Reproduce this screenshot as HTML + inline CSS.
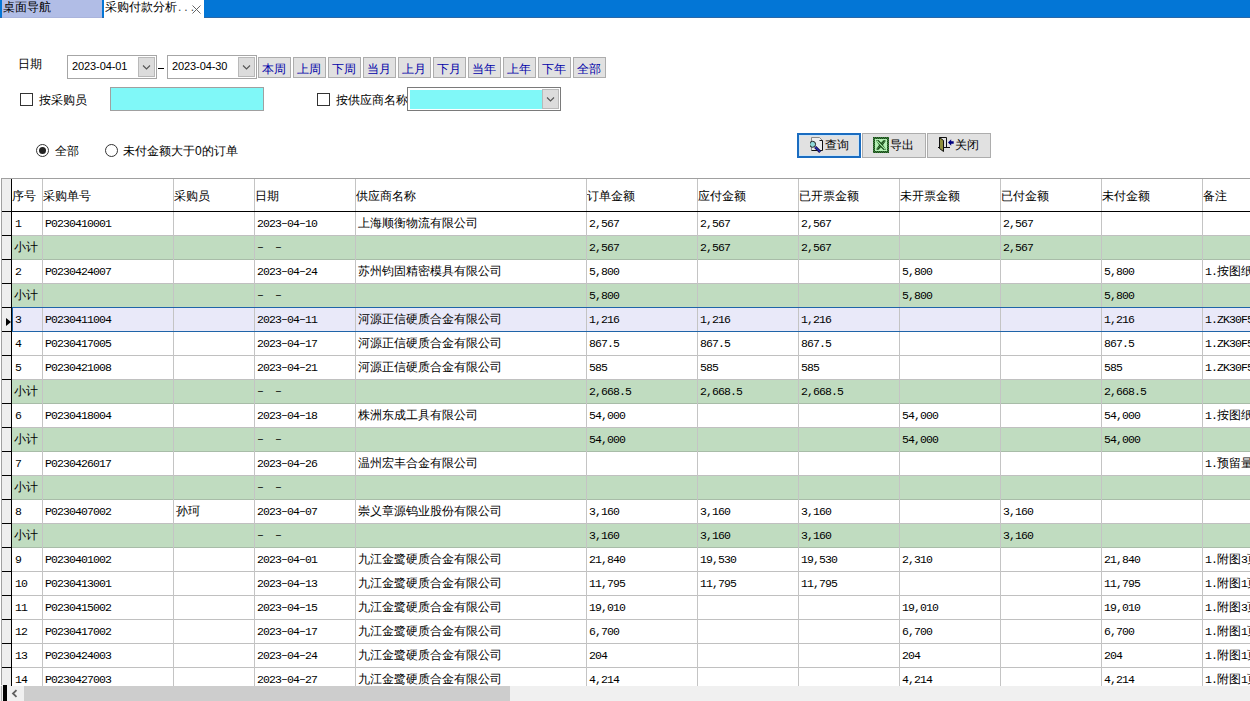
<!DOCTYPE html>
<html><head><meta charset="utf-8">
<style>
*{margin:0;padding:0;box-sizing:border-box}
html,body{width:1250px;height:701px;overflow:hidden;background:#fff;font-family:"Liberation Sans",sans-serif;font-size:12px;color:#000;position:relative}
.abs{position:absolute}
.tabbar{position:absolute;left:0;top:0;width:1250px;height:18px;background:#0376d6;border-bottom:1px solid #2a68a8}
.tab1{position:absolute;left:2px;top:0;width:100px;height:18px;background:#b1bde6;border-bottom:1px solid #aab4dc}
.tab2{position:absolute;left:104px;top:0;width:100px;height:18px;background:#fff}
.tabtxt{position:absolute;top:0px;font-size:12px;line-height:14px;white-space:nowrap;font-weight:500}
.lbl{position:absolute;font-size:12px;line-height:14px;white-space:nowrap;font-weight:500}
.combo{position:absolute;border:1px solid #a6a6a6;background:#fff}
.ddb{position:absolute;background:#dcdcdc;border:1px solid #b9b9b9}
.ddb svg{position:absolute;left:0;top:0}
.qb{position:absolute;top:57px;width:33px;height:21px;background:#e1e1e1;border:1px solid #adadad;color:#0000a8;font-size:12px;line-height:22px;text-align:center;white-space:nowrap;text-indent:-1px;font-weight:500}
.chk{position:absolute;width:13px;height:13px;border:1px solid #333;background:#fff}
.cyan{position:absolute;background:#80f8f8}
.radio{position:absolute;width:13px;height:13px;border:1px solid #555;border-radius:50%;background:#fff}
.btn{position:absolute;top:133px;height:25px;background:#e1e1e1;border:1px solid #adadad;font-size:12px;white-space:nowrap}
.grid{position:absolute;left:0;top:178px;width:1250px;height:508px;overflow:hidden}
.gi{position:absolute;left:0;top:-178px;width:1250px;height:685px}
.gi > *{position:absolute}
.hdr{left:1px;top:178px;width:1250px;height:34px;border-top:1px solid #a0a0a0;border-bottom:1px solid #000;background:#fff}
.hc{top:189px;font-size:12px;line-height:14px;white-space:nowrap;font-weight:500}
.row{left:1px;width:1250px;height:24px;background:#fff;border-bottom:1px solid #c0c0c0}
.row.green{background:#c0dcc0;border-bottom-color:#a8bca8}
.row.sel{background:#e9e9f9}
.dc{line-height:14px;white-space:nowrap;font-size:12px}
.m{font-family:"Liberation Mono",monospace;font-size:11.5px;letter-spacing:-0.9px}
.d{position:relative;top:-1px}
.c{font-size:12px;font-weight:500}
.vl{top:179px;width:1px;height:507px;background:#c4c4c4}
.hline{left:2px;top:211px;width:1250px;height:1px;background:#000}
.ind{left:1px;top:179px;width:10px;height:507px;background:#eeeeee}
.outl{left:1px;top:178px;width:1px;height:507px;background:#a0a0a0}
.indline{left:11px;top:179px;width:1px;height:507px;background:#000}
.indtick{left:2px;width:9px;height:1px;background:#000}
.arrow{left:6px;top:318px;width:0;height:0;border-top:4px solid transparent;border-bottom:4px solid transparent;border-left:5px solid #000}
.selbox{left:12px;top:307px;width:1250px;height:25px;border:1px solid #1f64a8;border-right:none}
.scroll{position:absolute;left:0;top:686px;width:1250px;height:15px;background:#f0f0f0}
</style></head><body>
<div class="tabbar"></div>
<div class="tab1"><div class="tabtxt" style="left:1px">桌面导航</div></div>
<div class="tab2"><div class="tabtxt" style="left:1px">采购付款分析<span style="letter-spacing:3px;margin-left:1px;color:#444">...</span></div>
<svg class="abs" style="left:87px;top:4px" width="11" height="11" viewBox="0 0 11 11"><path d="M1.5 1.5L9.5 9.5M9.5 1.5L1.5 9.5" stroke="#555" stroke-width="0.9"/></svg></div>

<div class="lbl" style="left:18px;top:57px">日期</div>
<div class="combo" style="left:67px;top:55px;width:90px;height:24px">
 <div class="lbl" style="left:4px;top:3px;font-size:11px;font-weight:400;letter-spacing:-0.1px">2023-04-01</div>
 <div class="ddb" style="left:70px;top:1px;width:17px;height:20px"><svg width="15" height="18"><path d="M4 7.5l3.5 3.5 3.5-3.5" fill="none" stroke="#555" stroke-width="1.1"/></svg></div>
</div>
<div class="abs" style="left:158px;top:68px;width:6px;height:1px;background:#000"></div>
<div class="combo" style="left:167px;top:55px;width:90px;height:24px">
 <div class="lbl" style="left:4px;top:3px;font-size:11px;font-weight:400;letter-spacing:-0.1px">2023-04-30</div>
 <div class="ddb" style="left:70px;top:1px;width:17px;height:20px"><svg width="15" height="18"><path d="M4 7.5l3.5 3.5 3.5-3.5" fill="none" stroke="#555" stroke-width="1.1"/></svg></div>
</div>
<div class="qb" style="left:258px">本周</div><div class="qb" style="left:293px">上周</div><div class="qb" style="left:328px">下周</div><div class="qb" style="left:363px">当月</div><div class="qb" style="left:398px">上月</div><div class="qb" style="left:433px">下月</div><div class="qb" style="left:468px">当年</div><div class="qb" style="left:503px">上年</div><div class="qb" style="left:538px">下年</div><div class="qb" style="left:573px">全部</div>

<div class="chk" style="left:20px;top:93px"></div>
<div class="lbl" style="left:39px;top:93px">按采购员</div>
<div class="combo" style="left:110px;top:87px;width:154px;height:24px;border-color:#a0a0a0"><div class="cyan" style="left:0;top:0;right:0;bottom:0"></div></div>
<div class="chk" style="left:317px;top:93px"></div>
<div class="lbl" style="left:336px;top:93px">按供应商名称</div>
<div class="combo" style="left:407px;top:87px;width:154px;height:24px;border-color:#7a7a7a">
 <div class="cyan" style="left:2px;top:2px;width:132px;height:19px"></div>
 <div class="ddb" style="left:134px;top:1px;width:17px;height:20px"><svg width="15" height="18"><path d="M4 7.5l3.5 3.5 3.5-3.5" fill="none" stroke="#555" stroke-width="1.1"/></svg></div>
</div>

<svg class="abs" style="left:36px;top:144px" width="13" height="13"><circle cx="6.5" cy="6.5" r="6" fill="#fff" stroke="#333" stroke-width="1"/><circle cx="6.5" cy="6.5" r="3.5" fill="#222"/></svg>
<div class="lbl" style="left:55px;top:144px">全部</div>
<svg class="abs" style="left:105px;top:144px" width="13" height="13"><circle cx="6.5" cy="6.5" r="6" fill="#fff" stroke="#333" stroke-width="1"/></svg>
<div class="lbl" style="left:123px;top:144px">未付金额大于0的订单</div>

<div class="btn" style="left:797px;width:64px;border:2px solid #1a6cc0"><div class="abs" style="left:0;top:0;right:0;bottom:0;border:1px solid #cce4f7"></div>
 <svg class="abs" style="left:11px;top:1px" width="16" height="18" viewBox="0 0 16 18">
  <path d="M1.5 1.5H9.5L12.5 4.5V14.5H1.5Z" fill="#ededed"/>
  <path d="M1.5 14.5V1.5H9.5L12.5 4.5" fill="none" stroke="#8a8a8a" stroke-width="1"/>
  <path d="M9.5 4.5H12.5V14.5H1.5" fill="none" stroke="#111" stroke-width="1"/>
  <circle cx="2.6" cy="8.3" r="3" fill="#8fd8d8" stroke="#222" stroke-width="1"/>
  <path d="M5.2 11l5 5" stroke="#101040" stroke-width="3"/>
  <path d="M5.2 11l5 5" stroke="#2a2ab8" stroke-width="1.3"/>
 </svg>
 <div class="lbl" style="left:26px;top:3px">查询</div>
</div>
<div class="btn" style="left:862px;width:64px">
 <svg class="abs" style="left:10px;top:3px" width="16" height="16" viewBox="0 0 16 16">
  <defs><pattern id="ck" width="2" height="2" patternUnits="userSpaceOnUse"><rect width="2" height="2" fill="#3f7f3f"/><rect width="1" height="1" fill="#1a4a1a"/><rect x="1" y="1" width="1" height="1" fill="#1a4a1a"/></pattern></defs>
  <rect x="0" y="0" width="16" height="16" fill="url(#ck)"/>
  <rect x="2" y="2" width="12" height="12" fill="#b4f0b4"/>
  <path d="M3 3.5L5.5 3L8 5.5L10.5 3L13 3.5L10 8L13 12.5L10.5 13L8 10.5L5.5 13L3 12.5L6 8Z" fill="url(#ck)"/>
  <path d="M4 4L12 12" stroke="#a8e8a8" stroke-width="1"/>
 </svg>
 <div class="lbl" style="left:27px;top:4px">导出</div>
</div>
<div class="btn" style="left:927px;width:64px">
 <svg class="abs" style="left:10px;top:3px" width="18" height="16" viewBox="0 0 18 16">
  <path d="M1.5 0.5h7v10" fill="none" stroke="#111" stroke-width="1"/>
  <path d="M0 10.5h12" fill="none" stroke="#111" stroke-width="1"/>
  <path d="M1.5 0.5l4 3v11l-4-3z" fill="#8f8f3a" stroke="#111" stroke-width="1"/>
  <path d="M10 5.5l3.2-3.2v2h2.5v2.5h-2.5v2z" fill="#000080"/>
 </svg>
 <div class="lbl" style="left:27px;top:4px">关闭</div>
</div>

<div class="grid"><div class="gi">
<div class="hdr"></div>
<div class="hc" style="left:12px">序号</div>
<div class="hc" style="left:43px">采购单号</div>
<div class="hc" style="left:174px">采购员</div>
<div class="hc" style="left:255px">日期</div>
<div class="hc" style="left:356px">供应商名称</div>
<div class="hc" style="left:587px">订单金额</div>
<div class="hc" style="left:698px">应付金额</div>
<div class="hc" style="left:799px">已开票金额</div>
<div class="hc" style="left:900px">未开票金额</div>
<div class="hc" style="left:1001px">已付金额</div>
<div class="hc" style="left:1102px">未付金额</div>
<div class="hc" style="left:1203px">备注</div>
<div class="row" style="top:212px"></div>
<div class="dc" style="left:15px;top:216px"><span class="m">1</span></div>
<div class="dc" style="left:45px;top:216px"><span class="m">P0230410001</span></div>
<div class="dc" style="left:257px;top:216px"><span class="m">2023<span class="d">&#8211;</span>04<span class="d">&#8211;</span>10</span></div>
<div class="dc" style="left:358px;top:216px"><span class="c">上海顺衡物流有限公司</span></div>
<div class="dc" style="left:589px;top:216px"><span class="m">2,567</span></div>
<div class="dc" style="left:700px;top:216px"><span class="m">2,567</span></div>
<div class="dc" style="left:801px;top:216px"><span class="m">2,567</span></div>
<div class="dc" style="left:1003px;top:216px"><span class="m">2,567</span></div>
<div class="row green" style="top:236px"></div>
<div class="dc" style="left:14px;top:240px"><span class="c">小计</span></div>
<div class="dc" style="left:257px;top:240px"><span class="m"><span class="d">&#8211;</span>&nbsp;&nbsp;<span class="d">&#8211;</span></span></div>
<div class="dc" style="left:589px;top:240px"><span class="m">2,567</span></div>
<div class="dc" style="left:700px;top:240px"><span class="m">2,567</span></div>
<div class="dc" style="left:801px;top:240px"><span class="m">2,567</span></div>
<div class="dc" style="left:1003px;top:240px"><span class="m">2,567</span></div>
<div class="row" style="top:260px"></div>
<div class="dc" style="left:15px;top:264px"><span class="m">2</span></div>
<div class="dc" style="left:45px;top:264px"><span class="m">P0230424007</span></div>
<div class="dc" style="left:257px;top:264px"><span class="m">2023<span class="d">&#8211;</span>04<span class="d">&#8211;</span>24</span></div>
<div class="dc" style="left:358px;top:264px"><span class="c">苏州钧固精密模具有限公司</span></div>
<div class="dc" style="left:589px;top:264px"><span class="m">5,800</span></div>
<div class="dc" style="left:902px;top:264px"><span class="m">5,800</span></div>
<div class="dc" style="left:1104px;top:264px"><span class="m">5,800</span></div>
<div class="dc" style="left:1205px;top:264px"><span class="m">1.</span><span class="c">按图纸加</span></div>
<div class="row green" style="top:284px"></div>
<div class="dc" style="left:14px;top:288px"><span class="c">小计</span></div>
<div class="dc" style="left:257px;top:288px"><span class="m"><span class="d">&#8211;</span>&nbsp;&nbsp;<span class="d">&#8211;</span></span></div>
<div class="dc" style="left:589px;top:288px"><span class="m">5,800</span></div>
<div class="dc" style="left:902px;top:288px"><span class="m">5,800</span></div>
<div class="dc" style="left:1104px;top:288px"><span class="m">5,800</span></div>
<div class="row sel" style="top:308px"></div>
<div class="dc" style="left:15px;top:312px"><span class="m">3</span></div>
<div class="dc" style="left:45px;top:312px"><span class="m">P0230411004</span></div>
<div class="dc" style="left:257px;top:312px"><span class="m">2023<span class="d">&#8211;</span>04<span class="d">&#8211;</span>11</span></div>
<div class="dc" style="left:358px;top:312px"><span class="c">河源正信硬质合金有限公司</span></div>
<div class="dc" style="left:589px;top:312px"><span class="m">1,216</span></div>
<div class="dc" style="left:700px;top:312px"><span class="m">1,216</span></div>
<div class="dc" style="left:801px;top:312px"><span class="m">1,216</span></div>
<div class="dc" style="left:1104px;top:312px"><span class="m">1,216</span></div>
<div class="dc" style="left:1205px;top:312px"><span class="m">1.ZK30F5</span><span class="c">品</span></div>
<div class="row" style="top:332px"></div>
<div class="dc" style="left:15px;top:336px"><span class="m">4</span></div>
<div class="dc" style="left:45px;top:336px"><span class="m">P0230417005</span></div>
<div class="dc" style="left:257px;top:336px"><span class="m">2023<span class="d">&#8211;</span>04<span class="d">&#8211;</span>17</span></div>
<div class="dc" style="left:358px;top:336px"><span class="c">河源正信硬质合金有限公司</span></div>
<div class="dc" style="left:589px;top:336px"><span class="m">867.5</span></div>
<div class="dc" style="left:700px;top:336px"><span class="m">867.5</span></div>
<div class="dc" style="left:801px;top:336px"><span class="m">867.5</span></div>
<div class="dc" style="left:1104px;top:336px"><span class="m">867.5</span></div>
<div class="dc" style="left:1205px;top:336px"><span class="m">1.ZK30F5</span><span class="c">品</span></div>
<div class="row" style="top:356px"></div>
<div class="dc" style="left:15px;top:360px"><span class="m">5</span></div>
<div class="dc" style="left:45px;top:360px"><span class="m">P0230421008</span></div>
<div class="dc" style="left:257px;top:360px"><span class="m">2023<span class="d">&#8211;</span>04<span class="d">&#8211;</span>21</span></div>
<div class="dc" style="left:358px;top:360px"><span class="c">河源正信硬质合金有限公司</span></div>
<div class="dc" style="left:589px;top:360px"><span class="m">585</span></div>
<div class="dc" style="left:700px;top:360px"><span class="m">585</span></div>
<div class="dc" style="left:801px;top:360px"><span class="m">585</span></div>
<div class="dc" style="left:1104px;top:360px"><span class="m">585</span></div>
<div class="dc" style="left:1205px;top:360px"><span class="m">1.ZK30F5</span><span class="c">品</span></div>
<div class="row green" style="top:380px"></div>
<div class="dc" style="left:14px;top:384px"><span class="c">小计</span></div>
<div class="dc" style="left:257px;top:384px"><span class="m"><span class="d">&#8211;</span>&nbsp;&nbsp;<span class="d">&#8211;</span></span></div>
<div class="dc" style="left:589px;top:384px"><span class="m">2,668.5</span></div>
<div class="dc" style="left:700px;top:384px"><span class="m">2,668.5</span></div>
<div class="dc" style="left:801px;top:384px"><span class="m">2,668.5</span></div>
<div class="dc" style="left:1104px;top:384px"><span class="m">2,668.5</span></div>
<div class="row" style="top:404px"></div>
<div class="dc" style="left:15px;top:408px"><span class="m">6</span></div>
<div class="dc" style="left:45px;top:408px"><span class="m">P0230418004</span></div>
<div class="dc" style="left:257px;top:408px"><span class="m">2023<span class="d">&#8211;</span>04<span class="d">&#8211;</span>18</span></div>
<div class="dc" style="left:358px;top:408px"><span class="c">株洲东成工具有限公司</span></div>
<div class="dc" style="left:589px;top:408px"><span class="m">54,000</span></div>
<div class="dc" style="left:902px;top:408px"><span class="m">54,000</span></div>
<div class="dc" style="left:1104px;top:408px"><span class="m">54,000</span></div>
<div class="dc" style="left:1205px;top:408px"><span class="m">1.</span><span class="c">按图纸加</span></div>
<div class="row green" style="top:428px"></div>
<div class="dc" style="left:14px;top:432px"><span class="c">小计</span></div>
<div class="dc" style="left:257px;top:432px"><span class="m"><span class="d">&#8211;</span>&nbsp;&nbsp;<span class="d">&#8211;</span></span></div>
<div class="dc" style="left:589px;top:432px"><span class="m">54,000</span></div>
<div class="dc" style="left:902px;top:432px"><span class="m">54,000</span></div>
<div class="dc" style="left:1104px;top:432px"><span class="m">54,000</span></div>
<div class="row" style="top:452px"></div>
<div class="dc" style="left:15px;top:456px"><span class="m">7</span></div>
<div class="dc" style="left:45px;top:456px"><span class="m">P0230426017</span></div>
<div class="dc" style="left:257px;top:456px"><span class="m">2023<span class="d">&#8211;</span>04<span class="d">&#8211;</span>26</span></div>
<div class="dc" style="left:358px;top:456px"><span class="c">温州宏丰合金有限公司</span></div>
<div class="dc" style="left:1205px;top:456px"><span class="m">1.</span><span class="c">预留量的</span></div>
<div class="row green" style="top:476px"></div>
<div class="dc" style="left:14px;top:480px"><span class="c">小计</span></div>
<div class="dc" style="left:257px;top:480px"><span class="m"><span class="d">&#8211;</span>&nbsp;&nbsp;<span class="d">&#8211;</span></span></div>
<div class="row" style="top:500px"></div>
<div class="dc" style="left:15px;top:504px"><span class="m">8</span></div>
<div class="dc" style="left:45px;top:504px"><span class="m">P0230407002</span></div>
<div class="dc" style="left:176px;top:504px"><span class="c">孙珂</span></div>
<div class="dc" style="left:257px;top:504px"><span class="m">2023<span class="d">&#8211;</span>04<span class="d">&#8211;</span>07</span></div>
<div class="dc" style="left:358px;top:504px"><span class="c">崇义章源钨业股份有限公司</span></div>
<div class="dc" style="left:589px;top:504px"><span class="m">3,160</span></div>
<div class="dc" style="left:700px;top:504px"><span class="m">3,160</span></div>
<div class="dc" style="left:801px;top:504px"><span class="m">3,160</span></div>
<div class="dc" style="left:1003px;top:504px"><span class="m">3,160</span></div>
<div class="row green" style="top:524px"></div>
<div class="dc" style="left:14px;top:528px"><span class="c">小计</span></div>
<div class="dc" style="left:257px;top:528px"><span class="m"><span class="d">&#8211;</span>&nbsp;&nbsp;<span class="d">&#8211;</span></span></div>
<div class="dc" style="left:589px;top:528px"><span class="m">3,160</span></div>
<div class="dc" style="left:700px;top:528px"><span class="m">3,160</span></div>
<div class="dc" style="left:801px;top:528px"><span class="m">3,160</span></div>
<div class="dc" style="left:1003px;top:528px"><span class="m">3,160</span></div>
<div class="row" style="top:548px"></div>
<div class="dc" style="left:15px;top:552px"><span class="m">9</span></div>
<div class="dc" style="left:45px;top:552px"><span class="m">P0230401002</span></div>
<div class="dc" style="left:257px;top:552px"><span class="m">2023<span class="d">&#8211;</span>04<span class="d">&#8211;</span>01</span></div>
<div class="dc" style="left:358px;top:552px"><span class="c">九江金鹭硬质合金有限公司</span></div>
<div class="dc" style="left:589px;top:552px"><span class="m">21,840</span></div>
<div class="dc" style="left:700px;top:552px"><span class="m">19,530</span></div>
<div class="dc" style="left:801px;top:552px"><span class="m">19,530</span></div>
<div class="dc" style="left:902px;top:552px"><span class="m">2,310</span></div>
<div class="dc" style="left:1104px;top:552px"><span class="m">21,840</span></div>
<div class="dc" style="left:1205px;top:552px"><span class="m">1.</span><span class="c">附图</span><span class="m">3</span><span class="c">页</span></div>
<div class="row" style="top:572px"></div>
<div class="dc" style="left:15px;top:576px"><span class="m">10</span></div>
<div class="dc" style="left:45px;top:576px"><span class="m">P0230413001</span></div>
<div class="dc" style="left:257px;top:576px"><span class="m">2023<span class="d">&#8211;</span>04<span class="d">&#8211;</span>13</span></div>
<div class="dc" style="left:358px;top:576px"><span class="c">九江金鹭硬质合金有限公司</span></div>
<div class="dc" style="left:589px;top:576px"><span class="m">11,795</span></div>
<div class="dc" style="left:700px;top:576px"><span class="m">11,795</span></div>
<div class="dc" style="left:801px;top:576px"><span class="m">11,795</span></div>
<div class="dc" style="left:1104px;top:576px"><span class="m">11,795</span></div>
<div class="dc" style="left:1205px;top:576px"><span class="m">1.</span><span class="c">附图</span><span class="m">1</span><span class="c">页</span></div>
<div class="row" style="top:596px"></div>
<div class="dc" style="left:15px;top:600px"><span class="m">11</span></div>
<div class="dc" style="left:45px;top:600px"><span class="m">P0230415002</span></div>
<div class="dc" style="left:257px;top:600px"><span class="m">2023<span class="d">&#8211;</span>04<span class="d">&#8211;</span>15</span></div>
<div class="dc" style="left:358px;top:600px"><span class="c">九江金鹭硬质合金有限公司</span></div>
<div class="dc" style="left:589px;top:600px"><span class="m">19,010</span></div>
<div class="dc" style="left:902px;top:600px"><span class="m">19,010</span></div>
<div class="dc" style="left:1104px;top:600px"><span class="m">19,010</span></div>
<div class="dc" style="left:1205px;top:600px"><span class="m">1.</span><span class="c">附图</span><span class="m">3</span><span class="c">页</span></div>
<div class="row" style="top:620px"></div>
<div class="dc" style="left:15px;top:624px"><span class="m">12</span></div>
<div class="dc" style="left:45px;top:624px"><span class="m">P0230417002</span></div>
<div class="dc" style="left:257px;top:624px"><span class="m">2023<span class="d">&#8211;</span>04<span class="d">&#8211;</span>17</span></div>
<div class="dc" style="left:358px;top:624px"><span class="c">九江金鹭硬质合金有限公司</span></div>
<div class="dc" style="left:589px;top:624px"><span class="m">6,700</span></div>
<div class="dc" style="left:902px;top:624px"><span class="m">6,700</span></div>
<div class="dc" style="left:1104px;top:624px"><span class="m">6,700</span></div>
<div class="dc" style="left:1205px;top:624px"><span class="m">1.</span><span class="c">附图</span><span class="m">1</span><span class="c">页</span></div>
<div class="row" style="top:644px"></div>
<div class="dc" style="left:15px;top:648px"><span class="m">13</span></div>
<div class="dc" style="left:45px;top:648px"><span class="m">P0230424003</span></div>
<div class="dc" style="left:257px;top:648px"><span class="m">2023<span class="d">&#8211;</span>04<span class="d">&#8211;</span>24</span></div>
<div class="dc" style="left:358px;top:648px"><span class="c">九江金鹭硬质合金有限公司</span></div>
<div class="dc" style="left:589px;top:648px"><span class="m">204</span></div>
<div class="dc" style="left:902px;top:648px"><span class="m">204</span></div>
<div class="dc" style="left:1104px;top:648px"><span class="m">204</span></div>
<div class="dc" style="left:1205px;top:648px"><span class="m">1.</span><span class="c">附图</span><span class="m">1</span><span class="c">页</span></div>
<div class="row" style="top:668px"></div>
<div class="dc" style="left:15px;top:672px"><span class="m">14</span></div>
<div class="dc" style="left:45px;top:672px"><span class="m">P0230427003</span></div>
<div class="dc" style="left:257px;top:672px"><span class="m">2023<span class="d">&#8211;</span>04<span class="d">&#8211;</span>27</span></div>
<div class="dc" style="left:358px;top:672px"><span class="c">九江金鹭硬质合金有限公司</span></div>
<div class="dc" style="left:589px;top:672px"><span class="m">4,214</span></div>
<div class="dc" style="left:902px;top:672px"><span class="m">4,214</span></div>
<div class="dc" style="left:1104px;top:672px"><span class="m">4,214</span></div>
<div class="dc" style="left:1205px;top:672px"><span class="m">1.</span><span class="c">附图</span><span class="m">1</span><span class="c">页</span></div>
<div class="vl" style="left:42px"></div>
<div class="vl" style="left:173px"></div>
<div class="vl" style="left:254px"></div>
<div class="vl" style="left:355px"></div>
<div class="vl" style="left:586px"></div>
<div class="vl" style="left:697px"></div>
<div class="vl" style="left:798px"></div>
<div class="vl" style="left:899px"></div>
<div class="vl" style="left:1000px"></div>
<div class="vl" style="left:1101px"></div>
<div class="vl" style="left:1202px"></div>
<div class="ind"></div><div class="indline"></div>
<div class="indtick" style="top:235px"></div>
<div class="indtick" style="top:259px"></div>
<div class="indtick" style="top:283px"></div>
<div class="indtick" style="top:307px"></div>
<div class="indtick" style="top:331px"></div>
<div class="indtick" style="top:355px"></div>
<div class="indtick" style="top:379px"></div>
<div class="indtick" style="top:403px"></div>
<div class="indtick" style="top:427px"></div>
<div class="indtick" style="top:451px"></div>
<div class="indtick" style="top:475px"></div>
<div class="indtick" style="top:499px"></div>
<div class="indtick" style="top:523px"></div>
<div class="indtick" style="top:547px"></div>
<div class="indtick" style="top:571px"></div>
<div class="indtick" style="top:595px"></div>
<div class="indtick" style="top:619px"></div>
<div class="indtick" style="top:643px"></div>
<div class="indtick" style="top:667px"></div>
<div class="hline"></div>
<div class="arrow"></div>
<div class="selbox"></div>
<div class="outl"></div>
</div></div>
<div class="scroll">
 <div class="abs" style="left:3px;top:-1px;width:4px;height:16px;background:#000"></div>
 <svg class="abs" style="left:10px;top:3px" width="10" height="10"><path d="M6.5 1.2L3 4.5L6.5 7.8" fill="none" stroke="#606060" stroke-width="1.8"/></svg>
 <div class="abs" style="left:1px;top:0;width:1px;height:15px;background:#b0b0b0"></div>
 <div class="abs" style="left:24px;top:0;width:486px;height:15px;background:#cdcdcd"></div>
</div>
</body></html>
